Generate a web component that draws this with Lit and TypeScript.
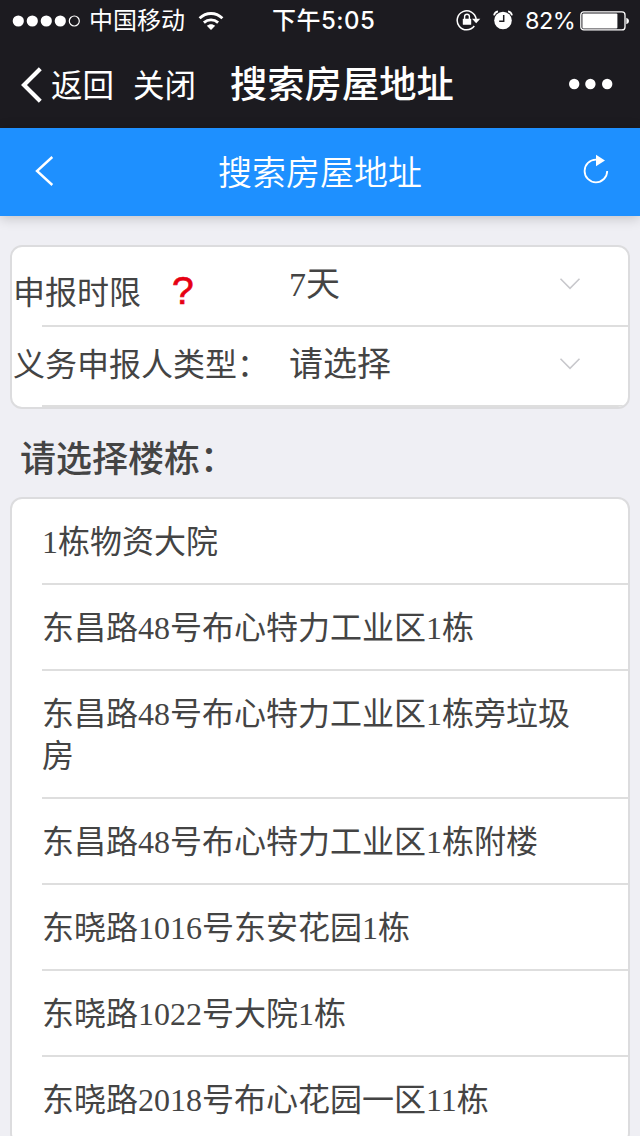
import { LitElement, html, css } from "lit";
import { customElement, property } from "lit/decorators.js";

const BUILDINGS = [
  "1栋物资大院",
  "东昌路48号布心特力工业区1栋",
  "东昌路48号布心特力工业区1栋旁垃圾房",
  "东昌路48号布心特力工业区1栋附楼",
  "东晓路1016号东安花园1栋",
  "东晓路1022号大院1栋",
  "东晓路2018号布心花园一区11栋",
];

@customElement("status-bar")
class StatusBar extends LitElement {
  static styles = css`
    :host {
      display: grid;
      grid-template-columns: 272px 1fr 184px;
      grid-template-rows: 40px;
      align-items: start;
      height: 40px;
      color: #fff;
      font: 24px/40px "Inter", "Noto Sans CJK SC", sans-serif;
    }
    .side { display: flex; align-items: center; height: 40px; }
    .signal { margin-left: 12px; margin-top: 1px; }
    .carrier { margin-left: 7px; margin-top: 2px; }
    .wifi { margin-left: 13px; margin-top: 1px; }
    .time { font: 500 24px/40px "Inter", "Noto Sans CJK SC", sans-serif; letter-spacing: 0.5px; white-space: nowrap; padding-top: 1px; }
    .level { margin-left: 12px; width: 50px; white-space: nowrap; font-family: "Inter", sans-serif; font-size: 23.5px; letter-spacing: -0.6px; margin-top: 2px; }
    .alarm { margin-left: 12px; }
    .battery { margin-left: 5px; margin-top: 1px; }
    svg { display: block; flex: none; }
  `;
  render() {
    return html`
      <div class="side">
        <svg class="signal" width="70" height="14" viewBox="0 0 70 14">
          <g fill="#fff">
            <circle cx="6.3" cy="7" r="5.6" /><circle cx="20.3" cy="7" r="5.6" />
            <circle cx="34.3" cy="7" r="5.6" /><circle cx="48.3" cy="7" r="5.6" />
          </g>
          <circle cx="62.3" cy="7" r="5" fill="none" stroke="#fff" stroke-width="1.2" />
        </svg>
        <span class="carrier">中国移动</span>
        <svg class="wifi" width="26" height="20" viewBox="0 0 26 20">
          <g fill="none" stroke="#fff" stroke-width="2.8">
            <path d="M1.6 7.3C8.2 .9 17.8 .9 24.4 7.3" />
            <path d="M5.9 11.6C10 7.9 16 7.9 20.1 11.6" />
          </g>
          <path fill="#fff" d="M8.8 14.8C11.3 12.6 14.7 12.6 17.2 14.8L13 19Z" />
        </svg>
      </div>
      <span class="time">下午5:05</span>
      <div class="side">
        <svg width="25" height="22" viewBox="0 0 25 22">
          <path d="M18.3 17A9.5 9.5 0 1 1 20.1 10" fill="none" stroke="#fff" stroke-width="1.5" />
          <path d="M16 9.8H24.3L20.2 14.2Z" fill="#fff" />
          <rect x="6.8" y="9.8" width="8.4" height="6" rx=".6" fill="#fff" />
          <path d="M8.6 10V7.6a2.4 2.4 0 0 1 4.8 0V10" fill="none" stroke="#fff" stroke-width="1.4" />
        </svg>
        <svg class="alarm" width="20" height="20" viewBox="0 0 20 20">
          <circle cx="10" cy="10.5" r="8.8" fill="#fff" />
          <path d="M1 5.4Q1.6 2 5 1.3M19 5.4Q18.4 2 15 1.3" fill="none" stroke="#fff" stroke-width="1.7" />
          <path d="M10.7 5V11.2H6.2" fill="none" stroke="#1c1b20" stroke-width="1.5" />
        </svg>
        <span class="level">82%</span>
        <svg class="battery" width="50" height="20" viewBox="0 0 50 20">
          <rect x=".8" y=".9" width="44.2" height="18" rx="3" fill="none" stroke="#fff" stroke-width="1.3" />
          <rect x="2.4" y="2.4" width="35" height="15" rx="1" fill="#fff" />
          <path d="M46.3 6.7Q49 7.4 49 10T46.3 13.3Z" fill="#fff" />
        </svg>
      </div>
    `;
  }
}

@customElement("browser-bar")
class BrowserBar extends LitElement {
  static styles = css`
    :host {
      display: flex;
      align-items: center;
      height: 88px;
      color: #fff;
      font: 31.5px/86px "Noto Sans CJK SC", sans-serif;
      white-space: nowrap;
    }
    .back { margin-left: 21px; margin-top: 1px; }
    .return { margin-left: 8px; margin-top: -3px; }
    .close { margin-left: 19px; margin-top: -3px; }
    .title { margin-left: 34px; margin-top: -4px; font-size: 37.3px; font-weight: 500; }
    .more { margin-left: auto; margin-right: 27px; }
    svg { display: block; flex: none; }
  `;
  render() {
    return html`
      <svg class="back" width="22" height="36" viewBox="0 0 22 36">
        <path d="M19.3 1.8L3 18L19.3 34.2" fill="none" stroke="#fff" stroke-width="4.2" />
      </svg>
      <span class="return">返回</span>
      <span class="close">关闭</span>
      <span class="title">搜索房屋地址</span>
      <svg class="more" width="44" height="12" viewBox="0 0 44 12">
        <g fill="#fff"><circle cx="5.2" cy="6" r="5.2" /><circle cx="21.4" cy="6" r="5.2" /><circle cx="38.2" cy="6" r="5.2" /></g>
      </svg>
    `;
  }
}

@customElement("page-header")
class PageHeader extends LitElement {
  static styles = css`
    :host {
      display: grid;
      grid-template-columns: 100px 1fr 100px;
      align-items: center;
      height: 88px;
      background: #1e90ff;
      box-shadow: 0 2px 12px rgba(0, 0, 0, 0.2);
      color: #fff;
    }
    .title { font: 350 34px/86px "Noto Sans CJK SC", sans-serif; text-align: center; margin-top: -2px; }
    .back { margin-left: 34px; margin-top: -3px; }
    .reload { margin-left: 42px; margin-top: -6px; }
    svg { display: block; }
  `;
  render() {
    return html`
      <svg class="back" width="21" height="32" viewBox="0 0 21 32">
        <path d="M18.3 2L3 16L18.3 30" fill="none" stroke="#fff" stroke-width="2.4" />
      </svg>
      <span class="title">搜索房屋地址</span>
      <svg class="reload" width="28" height="30" viewBox="0 0 28 30">
        <path d="M14 5.7A11.3 11.3 0 1 0 25.2 17" fill="none" stroke="#fff" stroke-width="1.8" />
        <path d="M14 .8L23 6.6L14 12.2Z" fill="#fff" />
      </svg>
    `;
  }
}

@customElement("select-row")
class SelectRow extends LitElement {
  @property() value = "";
  static styles = css`
    :host {
      display: grid;
      grid-template-columns: 277px 1fr 70px;
      height: 80px;
      box-sizing: border-box;
      background: linear-gradient(#dedede, #dedede) 30px 100% / 100% 2px no-repeat;
      color: #444;
    }
    .label {
      font: 32px/42px "Noto Sans CJK SC", sans-serif;
      padding-top: var(--label-top, 14px);
      padding-left: 1px;
      white-space: nowrap;
    }
    .value { font: 34px/42px "Liberation Serif", "Noto Sans CJK SC", serif; padding-top: 17px; }
    svg { display: block; margin-top: 30px; margin-left: 1px; }
  `;
  render() {
    return html`
      <div class="label"><slot></slot></div>
      <div class="value">${this.value}</div>
      <svg width="22" height="14" viewBox="0 0 22 14">
        <path d="M1.5 1.8L11 11.3L20.5 1.8" fill="none" stroke="#c8c8cc" stroke-width="1.6" />
      </svg>
    `;
  }
}

@customElement("app-root")
class AppRoot extends LitElement {
  static styles = css`
    :host {
      display: flex;
      flex-direction: column;
      height: 1136px;
      overflow: hidden;
      background: #efeff4;
    }
    .dark { background: #1c1b20; flex: none; }
    page-header { flex: none; }
    .card {
      flex: none;
      margin: 0 10px;
      border: 2px solid #dcdcde;
      border-radius: 12px;
      background: #fff;
      overflow: hidden;
      color: #444;
    }
    .filters { margin-top: 29px; }
    .deadline { --label-top: 22px; }
    .help {
      margin-left: 31px;
      color: #e60012;
      font: 39px/38px "Liberation Sans", sans-serif;
      -webkit-text-stroke: 0.7px #e60012;
    }
    .heading {
      flex: none;
      margin: 0;
      padding-left: 20px;
      height: 88px;
      color: #444;
      font: 500 36px/95px "Noto Sans CJK SC", sans-serif;
    }
    .item {
      padding: 22px 28px 22px 30px;
      background: linear-gradient(#dedede, #dedede) 30px 100% / 100% 2px no-repeat;
      font: 32px/42px "Liberation Serif", "Noto Sans CJK SC", serif;
    }
  `;
  render() {
    return html`
      <div class="dark">
        <status-bar></status-bar>
        <browser-bar></browser-bar>
      </div>
      <page-header></page-header>
      <section class="card filters">
        <select-row class="deadline" value="7天">申报时限<span class="help">?</span></select-row>
        <select-row value="请选择">义务申报人类型：</select-row>
      </section>
      <h2 class="heading">请选择楼栋：</h2>
      <section class="card">
        ${BUILDINGS.map((name) => html`<div class="item">${name}</div>`)}
      </section>
    `;
  }
}
